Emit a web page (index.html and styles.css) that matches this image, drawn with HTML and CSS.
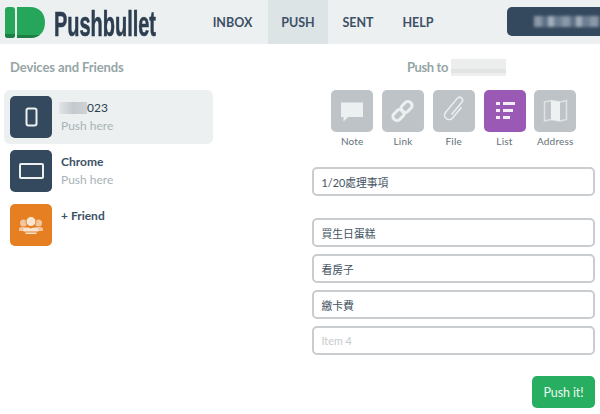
FILE: index.html
```html
<!DOCTYPE html>
<html lang="zh-Hant">
<head>
<meta charset="utf-8">
<title>Pushbullet</title>
<link rel="stylesheet" href="styles.css">
</head>
<body>
<header class="topbar">
  <div class="brand">
    <svg class="logo" width="42" height="32" viewBox="0 0 42 32">
      <rect x="1" y="0" width="10" height="31" rx="3" fill="#25a65b"/>
      <path d="M13 0H26C36 0 41 7 41 15.500S36 31 26 31H13Z" fill="#25a65b"/>
      <path d="M1 27H11V28A3 3 0 0 1 8 31H4A3 3 0 0 1 1 28Z" fill="#1b7f45"/>
      <path d="M13 28H36C33 30 30 31 26 31H13Z" fill="#1b7f45"/>
    </svg>
    <span class="wordmark">Pushbullet</span>
  </div>
  <nav class="nav">
    <a class="nav-item nav-inbox">INBOX</a>
    <a class="nav-item nav-push">PUSH</a>
    <a class="nav-item nav-sent">SENT</a>
    <a class="nav-item nav-help">HELP</a>
  </nav>
  <div class="account"><span class="account-blur"></span></div>
</header>
<main class="main">
  <section class="devices">
    <h2 class="heading heading-left">Devices and Friends</h2>
    <ul class="device-list">
      <li class="device device-active">
        <span class="tile tile-navy">
          <svg width="42" height="42" viewBox="0 0 42 42"><rect x="16.500" y="12.500" width="10" height="17" rx="2" fill="none" stroke="#ecf0f1" stroke-width="2"/></svg>
        </span>
        <div class="device-text">
          <div class="device-name device-name-plain"><span class="name-blur"></span>023</div>
          <div class="device-sub">Push here</div>
        </div>
      </li>
      <li class="device">
        <span class="tile tile-navy">
          <svg width="42" height="42" viewBox="0 0 42 42"><rect x="10" y="14" width="23" height="14" rx="1" fill="none" stroke="#ecf0f1" stroke-width="2"/></svg>
        </span>
        <div class="device-text">
          <div class="device-name">Chrome</div>
          <div class="device-sub">Push here</div>
        </div>
      </li>
      <li class="device">
        <span class="tile tile-orange">
          <svg width="42" height="42" viewBox="0 0 42 42" fill="#f8e6d2">
            <circle cx="13.500" cy="19" r="3.500" opacity=".7"/>
            <circle cx="28.500" cy="19" r="3.500" opacity=".7"/>
            <path d="M9 24C11 22.500 15 22.500 17 24V27H9ZM25 24C27 22.500 31 22.500 33 24V27H25Z" opacity=".7"/>
            <circle cx="21" cy="17.500" r="5" stroke="#e67e22"/>
            <path d="M13.500 25C16 23 18.500 23 21 24.500C23.500 23 26 23 28.500 25V27.500H13.500ZM15.500 28.500H26.500V30H15.500Z"/>
          </svg>
        </span>
        <div class="device-text">
          <div class="device-name device-friend">+ Friend</div>
        </div>
      </li>
    </ul>
  </section>
  <section class="composer">
    <h2 class="heading heading-push">Push to<span class="target-blur"></span></h2>
    <div class="types">
      <div class="type">
        <span class="type-tile">
          <svg width="42" height="42" viewBox="0 0 42 42"><path d="M10 12.500H32V27H17L12.500 31.500V27H10Z" fill="#ecf0f1"/></svg>
        </span>
        <span class="type-label">Note</span>
      </div>
      <div class="type">
        <span class="type-tile">
          <svg width="42" height="42" viewBox="0 0 42 42" fill="none" stroke="#ecf0f1" stroke-width="3">
            <rect x="18.500" y="13" width="12" height="8" rx="3.500" transform="rotate(-45 24.500 17)"/>
            <rect x="10.500" y="21" width="12" height="8" rx="3.500" transform="rotate(-45 16.500 25)"/>
          </svg>
        </span>
        <span class="type-label">Link</span>
      </div>
      <div class="type">
        <span class="type-tile">
          <svg width="42" height="42" viewBox="0 0 42 42" fill="none" stroke="#ecf0f1" stroke-width="1.500">
            <path transform="rotate(40 21 20)" d="M25 13V27C25 33 16 33 16 27V9C16 5 22 5 22 9V25"/>
          </svg>
        </span>
        <span class="type-label">File</span>
      </div>
      <div class="type">
        <span class="type-tile type-tile-active">
          <svg width="42" height="42" viewBox="0 0 42 42" fill="#f4ecf7"><rect x="12" y="12" width="4" height="3"/><rect x="19" y="12" width="12" height="3"/><rect x="12" y="19" width="4" height="3"/><rect x="19" y="19" width="10" height="3"/><rect x="12" y="26" width="4" height="3"/><rect x="19" y="26" width="7" height="3"/></svg>
        </span>
        <span class="type-label">List</span>
      </div>
      <div class="type">
        <span class="type-tile">
          <svg width="42" height="42" viewBox="0 0 42 42">
            <path d="M10.500 12L17 10.500L26 12L32.500 10.500V29.500L26 31L17 29.500L10.500 31Z" fill="none" stroke="#dfe3e5" stroke-width="1.500"/>
            <path d="M17 10.500L26 12V31L17 29.500Z" fill="#eef1f2"/>
          </svg>
        </span>
        <span class="type-label">Address</span>
      </div>
    </div>
    <form class="form">
      <div class="field field-title">1/20處理事項</div>
      <div class="items">
        <div class="field">買生日蛋糕</div>
        <div class="field">看房子</div>
        <div class="field">繳卡費</div>
        <div class="field field-placeholder">Item 4</div>
      </div>
      <div class="actions"><span class="push-button">Push it!</span></div>
    </form>
  </section>
</main>
</body>
</html>
```
FILE: styles.css
```css
* { box-sizing: border-box; }
html, body { margin: 0; padding: 0; }
body {
  width: 600px;
  height: 414px;
  overflow: hidden;
  background: #fff;
  font-family: Lato, "Noto Sans CJK TC", sans-serif;
  color: #34495e;
}
.topbar {
  display: flex;
  align-items: stretch;
  height: 44px;
  background: #ecf0f1;
}
.brand {
  display: flex;
  align-items: center;
  width: 197px;
  padding-left: 4px;
  gap: 8px;
  overflow: hidden;
}
.logo { flex: none; margin-top: 1px; }
.wordmark {
  font-family: "Liberation Sans", sans-serif;
  font-weight: 700;
  font-size: 35px;
  line-height: 35px;
  color: #2c3e50;
  -webkit-text-stroke: .6px #2c3e50;
  display: inline-block;
  transform: scaleX(.57);
  transform-origin: left center;
  margin-top: 3px;
  white-space: nowrap;
}
.nav { display: flex; align-items: stretch; font-size: 12.500px; font-weight: 700; }
.nav-item { display: flex; align-items: center; justify-content: center; color: #3d5166; }
.nav-inbox { width: 71px; }
.nav-push { width: 60px; background: #dde4e6; }
.nav-sent { width: 60px; }
.nav-help { width: 60px; }
.account {
  margin: 7px 0 8px auto;
  width: 93px;
  background: #34495e;
  border-radius: 5px 0 0 5px;
  display: flex;
  align-items: center;
  padding-left: 27px;
}
.account-blur {
  display: block;
  width: 66px;
  height: 11px;
  background: repeating-linear-gradient(90deg, #8a98a8 0 8px, #5d7086 8px 14px, #a3aeba 14px 20px, #6d7f93 20px 28px);
  filter: blur(1.500px);
}
.main {
  display: grid;
  grid-template-columns: 312px 283px;
}
.heading {
  margin: 0;
  font-size: 13px;
  font-weight: 700;
  color: #95a5a6;
  line-height: 18px;
  padding-top: 14px;
}
.heading-left { padding-left: 10px; letter-spacing: -.1px; }
.heading-push {
  padding-left: 95px;
  display: flex;
  align-items: center;
  letter-spacing: -.4px;
}
.target-blur {
  display: inline-block;
  width: 55px;
  height: 17px;
  margin-left: 3px;
  background: linear-gradient(180deg, #eceeee 0 60%, #e2e4e4 60% 80%, #eeeeee 80%);
}
.device-list { list-style: none; margin: 14px 0 0; padding: 0 0 0 4px; width: 213px; }
.device { display: flex; gap: 9px; padding: 6px; border-radius: 6px; height: 54px; }
.device-active { background: #ecf0f1; }
.tile, .type-tile {
  display: block;
  flex: none;
  width: 42px;
  height: 42px;
  border-radius: 5px;
}
.tile-navy { background: #34495e; }
.tile-orange { background: #e67e22; }
.device-text { padding-top: 4px; min-width: 0; }
.device-name {
  display: flex;
  align-items: center;
  font-size: 12px;
  font-weight: 700;
  line-height: 16px;
  color: #3d5166;
}
.device-name-plain { font-weight: 400; color: #2c3e50; }
.name-blur {
  display: inline-block;
  width: 28px;
  height: 12px;
  margin-left: -2px;
  background: linear-gradient(90deg, #e2e4e6, #c4c9ce 50%, #cfd3d6);
}
.device-sub { margin-top: 2px; font-size: 12px; line-height: 16px; color: #a8b3b5; }
.types {
  display: flex;
  gap: 8.250px;
  margin: 14px 0 0 19px;
}
.type { display: flex; flex-direction: column; align-items: center; width: 42.500px; }
.type-tile { background: #bdc3c7; }
.type-tile-active { background: #9b59b6; }
.type-label { margin-top: 2px; font-size: 10px; line-height: 15px; color: #5f6f78; letter-spacing: .2px; white-space: nowrap; }
.form { margin-top: 18px; }
.field {
  height: 29px;
  border: 2px solid #c9cdcf;
  border-radius: 5px;
  padding: 0 7.500px;
  display: flex;
  align-items: center;
  font-size: 10.800px;
  color: #445362;
  background: #fff;
}
.field-placeholder { color: #c5cacc; }
.items { display: grid; grid-template-columns: 1fr; gap: 7px; margin-top: 22px; }
.actions { display: flex; justify-content: flex-end; margin-top: 21px; }
.push-button {
  display: flex;
  align-items: center;
  justify-content: center;
  width: 63px;
  height: 32px;
  background: #27ae60;
  color: #ecf8f1;
  border-radius: 5px;
  font-size: 12.500px;
  font-weight: 400;
  letter-spacing: -.1px;
}
```
